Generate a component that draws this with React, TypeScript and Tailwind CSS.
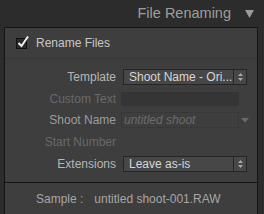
import React from "react";

const font = { fontFamily: '"Liberation Sans", Arial, sans-serif' };

function Stepper() {
  return (
    <div className="flex h-full w-[13px] shrink-0 items-center justify-center border-l border-[#262626]">
      <svg width="7" height="10" viewBox="0 0 7 10">
        <path d="M3.5 1 L6 4 L1 4 Z" fill="#a8a8a8" />
        <path d="M3.5 9 L6 6 L1 6 Z" fill="#a8a8a8" />
      </svg>
    </div>
  );
}

function Select({ value }: { value: string }) {
  return (
    <div className="ml-[7px] flex h-[16px] w-[124px] items-center border border-[#252525] bg-[#474747]">
      <span className="flex-1 truncate pl-[5px] text-[12px] leading-none text-[#d6d6d6]">{value}</span>
      <Stepper />
    </div>
  );
}

function Label({ children, dim }: { children: React.ReactNode; dim?: "on" | "mid" | "off" }) {
  const color =
    dim === "off" ? "text-[#696969]" : dim === "mid" ? "text-[#9c9c9c]" : "text-[#b6b6b6]";
  return (
    <span className={`w-[111px] shrink-0 text-right text-[12px] leading-none ${color}`}>{children}</span>
  );
}

export default function App() {
  return (
    <div className="flex h-[214px] w-[264px] flex-col overflow-hidden bg-[#2c2c2c]" style={font}>
      {/* header */}
      <div className="flex h-[27px] shrink-0 items-center justify-end gap-[14px] pr-[10px]">
        <span className="text-[14.5px] leading-none text-[#9e9e9e]">File Renaming</span>
        <svg width="9" height="9" viewBox="0 0 9 9">
          <path d="M0 1 L9 1 L4.5 9 Z" fill="#9a9a9a" />
        </svg>
      </div>

      {/* panel */}
      <div className="ml-[4px] mr-[6px] flex flex-1 flex-col border-x border-t border-[#141414] bg-[#3e3e3e]">
        <div className="flex h-[30px] shrink-0 items-center gap-[9px] pl-[11px]">
          <div className="relative h-[11px] w-[11px] border border-[#111] bg-[#2a2a2a]">
            <svg className="absolute -left-[1px] -top-[4px]" width="14" height="14" viewBox="0 0 14 14">
              <path d="M2.5 8 L5.5 11 L12 1.5" fill="none" stroke="#f2f2f2" strokeWidth="2" />
            </svg>
          </div>
          <span className="text-[12px] leading-none text-[#c8c8c8]">Rename Files</span>
        </div>
        <div className="h-px shrink-0 bg-[#373737]" />

        <div className="flex flex-col pt-[9px]">
          <div className="flex h-[17px] items-center">
            <Label>Template</Label>
            <Select value="Shoot Name - Ori..." />
          </div>

          <div className="mt-[7px] flex h-[14px] items-center">
            <Label dim="off">Custom Text</Label>
            <div className="ml-[5px] h-[14px] w-[118px] bg-[#353535]" />
          </div>

          <div className="mt-[6px] flex h-[16px] items-center">
            <Label dim="mid">Shoot Name</Label>
            <div className="ml-[5px] flex h-[16px] w-[118px] items-center border border-[#383838] pl-[2px]">
              <span className="text-[12px] italic leading-none text-[#6c6c6c]">untitled shoot</span>
            </div>
            <svg className="ml-[2px]" width="8" height="5" viewBox="0 0 8 5">
              <path d="M0 0 L8 0 L4 4.5 Z" fill="#6a6a6a" />
            </svg>
          </div>

          <div className="mt-[6px] flex h-[16px] items-center">
            <Label dim="off">Start Number</Label>
          </div>

          <div className="mt-[5px] flex h-[17px] items-center">
            <Label>Extensions</Label>
            <Select value="Leave as-is" />
          </div>
        </div>

        <div className="mt-[10px] h-px shrink-0 bg-[#141414]" />

        <div className="flex h-[32px] items-center pl-[31px] text-[12px] leading-none text-[#a6a6a6]">
          <span>Sample :</span>
          <span className="ml-[11px]">untitled shoot-001.RAW</span>
        </div>
      </div>
    </div>
  );
}
